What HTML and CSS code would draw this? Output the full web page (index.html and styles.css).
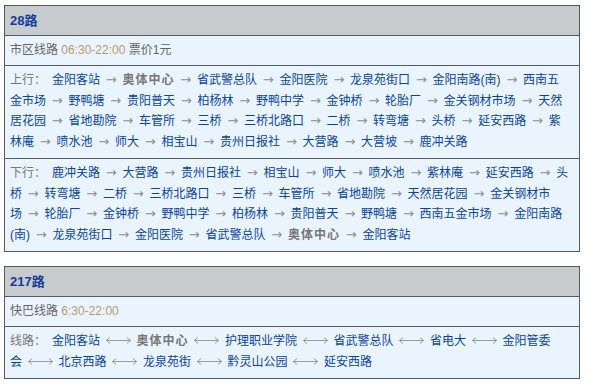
FILE: index.html
```html
<!DOCTYPE html>
<html lang="zh-CN">
<head>
<meta charset="utf-8">
<title>公交线路</title>
<link rel="stylesheet" href="styles.css">
</head>
<body>
<div class="route">
  <div class="head">28路</div>
  <div class="info">市区线路 <span class="time">06:30-22:00</span> 票价1元</div>
  <div class="stops"><span class="lbl">上行：</span><a>金阳客站</a><span class="arr">&#8288;→</span><b>奥体中心</b><span class="arr">&#8288;→</span><a>省武警总队</a><span class="arr">&#8288;→</span><a>金阳医院</a><span class="arr">&#8288;→</span><a>龙泉苑街口</a><span class="arr">&#8288;→</span><a>金阳南路(南)</a><span class="arr">&#8288;→</span><a>西南五金市场</a><span class="arr">&#8288;→</span><a>野鸭塘</a><span class="arr">&#8288;→</span><a>贵阳普天</a><span class="arr">&#8288;→</span><a>柏杨林</a><span class="arr">&#8288;→</span><a>野鸭中学</a><span class="arr">&#8288;→</span><a>金钟桥</a><span class="arr">&#8288;→</span><a>轮胎厂</a><span class="arr">&#8288;→</span><a>金关钢材市场</a><span class="arr">&#8288;→</span><a>天然居花园</a><span class="arr">&#8288;→</span><a>省地勘院</a><span class="arr">&#8288;→</span><a>车管所</a><span class="arr">&#8288;→</span><a>三桥</a><span class="arr">&#8288;→</span><a>三桥北路口</a><span class="arr">&#8288;→</span><a>二桥</a><span class="arr">&#8288;→</span><a>转弯塘</a><span class="arr">&#8288;→</span><a>头桥</a><span class="arr">&#8288;→</span><a>延安西路</a><span class="arr">&#8288;→</span><a>紫林庵</a><span class="arr">&#8288;→</span><a>喷水池</a><span class="arr">&#8288;→</span><a>师大</a><span class="arr">&#8288;→</span><a>相宝山</a><span class="arr">&#8288;→</span><a>贵州日报社</a><span class="arr">&#8288;→</span><a>大营路</a><span class="arr">&#8288;→</span><a>大营坡</a><span class="arr">&#8288;→</span><a>鹿冲关路</a></div>
  <div class="stops"><span class="lbl">下行：</span><a>鹿冲关路</a><span class="arr">&#8288;→</span><a>大营路</a><span class="arr">&#8288;→</span><a>贵州日报社</a><span class="arr">&#8288;→</span><a>相宝山</a><span class="arr">&#8288;→</span><a>师大</a><span class="arr">&#8288;→</span><a>喷水池</a><span class="arr">&#8288;→</span><a>紫林庵</a><span class="arr">&#8288;→</span><a>延安西路</a><span class="arr">&#8288;→</span><a>头桥</a><span class="arr">&#8288;→</span><a>转弯塘</a><span class="arr">&#8288;→</span><a>二桥</a><span class="arr">&#8288;→</span><a>三桥北路口</a><span class="arr">&#8288;→</span><a>三桥</a><span class="arr">&#8288;→</span><a>车管所</a><span class="arr">&#8288;→</span><a>省地勘院</a><span class="arr">&#8288;→</span><a>天然居花园</a><span class="arr">&#8288;→</span><a>金关钢材市场</a><span class="arr">&#8288;→</span><a>轮胎厂</a><span class="arr">&#8288;→</span><a>金钟桥</a><span class="arr">&#8288;→</span><a>野鸭中学</a><span class="arr">&#8288;→</span><a>柏杨林</a><span class="arr">&#8288;→</span><a>贵阳普天</a><span class="arr">&#8288;→</span><a>野鸭塘</a><span class="arr">&#8288;→</span><a>西南五金市场</a><span class="arr">&#8288;→</span><a>金阳南路(南)</a><span class="arr">&#8288;→</span><a>龙泉苑街口</a><span class="arr">&#8288;→</span><a>金阳医院</a><span class="arr">&#8288;→</span><a>省武警总队</a><span class="arr">&#8288;→</span><b>奥体中心</b><span class="arr">&#8288;→</span><a>金阳客站</a></div>
</div>
<div class="route">
  <div class="head">217路</div>
  <div class="info">快巴线路 <span class="time">6:30-22:00</span></div>
  <div class="stops stops-express"><span class="lbl">线路：</span><a>金阳客站</a><span class="darr"><svg width="27" height="9" viewBox="0 0 27 9"><path d="M1 4.5H26M5 1.5L1.5 4.5L5 7.5M22 1.5L25.5 4.5L22 7.5" fill="none" stroke="#9a9a9a" stroke-width="1"/></svg></span><b>奥体中心</b><span class="darr"><svg width="27" height="9" viewBox="0 0 27 9"><path d="M1 4.5H26M5 1.5L1.5 4.5L5 7.5M22 1.5L25.5 4.5L22 7.5" fill="none" stroke="#9a9a9a" stroke-width="1"/></svg></span><a>护理职业学院</a><span class="darr"><svg width="27" height="9" viewBox="0 0 27 9"><path d="M1 4.5H26M5 1.5L1.5 4.5L5 7.5M22 1.5L25.5 4.5L22 7.5" fill="none" stroke="#9a9a9a" stroke-width="1"/></svg></span><a>省武警总队</a><span class="darr"><svg width="27" height="9" viewBox="0 0 27 9"><path d="M1 4.5H26M5 1.5L1.5 4.5L5 7.5M22 1.5L25.5 4.5L22 7.5" fill="none" stroke="#9a9a9a" stroke-width="1"/></svg></span><a>省电大</a><span class="darr"><svg width="27" height="9" viewBox="0 0 27 9"><path d="M1 4.5H26M5 1.5L1.5 4.5L5 7.5M22 1.5L25.5 4.5L22 7.5" fill="none" stroke="#9a9a9a" stroke-width="1"/></svg></span><a>金阳管委会</a><span class="darr"><svg width="27" height="9" viewBox="0 0 27 9"><path d="M1 4.5H26M5 1.5L1.5 4.5L5 7.5M22 1.5L25.5 4.5L22 7.5" fill="none" stroke="#9a9a9a" stroke-width="1"/></svg></span><a>北京西路</a><span class="darr"><svg width="27" height="9" viewBox="0 0 27 9"><path d="M1 4.5H26M5 1.5L1.5 4.5L5 7.5M22 1.5L25.5 4.5L22 7.5" fill="none" stroke="#9a9a9a" stroke-width="1"/></svg></span><a>龙泉苑街</a><span class="darr"><svg width="27" height="9" viewBox="0 0 27 9"><path d="M1 4.5H26M5 1.5L1.5 4.5L5 7.5M22 1.5L25.5 4.5L22 7.5" fill="none" stroke="#9a9a9a" stroke-width="1"/></svg></span><a>黔灵山公园</a><span class="darr"><svg width="27" height="9" viewBox="0 0 27 9"><path d="M1 4.5H26M5 1.5L1.5 4.5L5 7.5M22 1.5L25.5 4.5L22 7.5" fill="none" stroke="#9a9a9a" stroke-width="1"/></svg></span><a>延安西路</a></div>
</div>
</body>
</html>
```

FILE: styles.css
```css
html, body {
  margin: 0;
  padding: 0;
  background: #ffffff;
}
body {
  padding: 5px 0 0 4px;
  font-family: "Liberation Sans", "Noto Sans CJK SC", sans-serif;
  font-size: 12px;
  color: #666666;
}
.route {
  width: 574px;
  border: 1px solid #555a60;
  margin-bottom: 14px;
}
.head {
  height: 29px;
  line-height: 29px;
  padding-left: 5px;
  background: #c8cbce;
  color: #123c9a;
  font-weight: bold;
  font-size: 13px;
  border-bottom: 1px solid #555a60;
}
.info {
  height: 29px;
  line-height: 29px;
  padding-left: 5px;
  background: #eaf4ff;
  border-bottom: 1px solid #555a60;
}
.time {
  color: #b89a70;
}
.stops {
  background: #eaf4ff;
  padding: 4px 9.5px 6px 5px;
  line-height: 20.5px;
  border-bottom: 1px solid #555a60;
}
.stops:last-child {
  border-bottom: none;
}
.stops-express {
  padding-right: 20px;
}
.lbl {
  color: #777777;
  margin-right: 6px;
}
.stops a {
  color: #0b4597;
}
.stops b {
  color: #777777;
  letter-spacing: 1px;
}
.arr {
  color: #8e8e8e;
  font-family: "DejaVu Sans", sans-serif;
  font-size: 13px;
  margin: 0 5.8px;
}
.darr {
  display: inline-block;
  margin: 0 4.75px;
  line-height: 1;
}
.darr svg {
  display: block;
}
```
